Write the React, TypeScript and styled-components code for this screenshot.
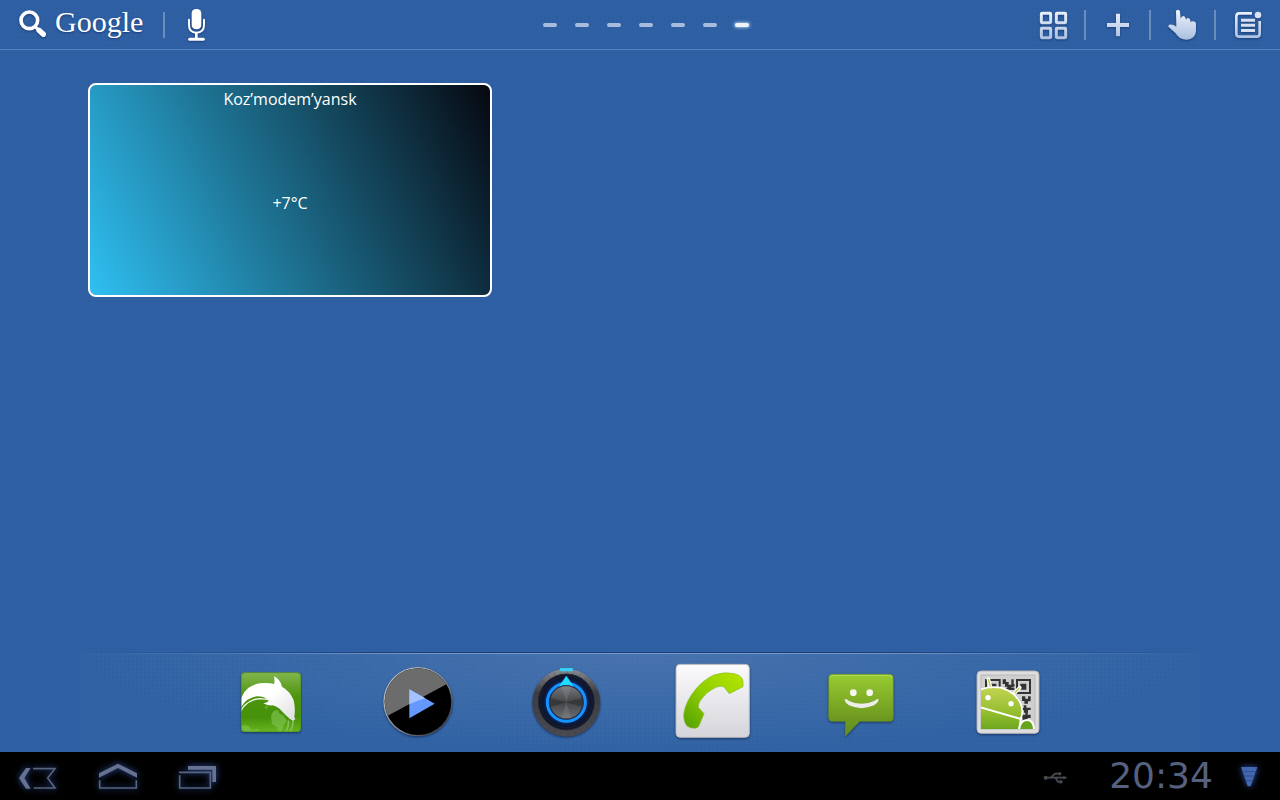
import React from 'react';
import styled, { createGlobalStyle, css } from 'styled-components';

const GlobalStyle = createGlobalStyle`
  * { box-sizing: border-box; }
  body { margin: 0; font-family: 'Open Sans', 'Noto Sans', sans-serif; background: #000; }
  button { margin: 0; padding: 0; border: 0; background: none; color: inherit; font: inherit; cursor: pointer; }
`;

const Screen = styled.div`
  display: flex;
  flex-direction: column;
  min-height: 100vh;
`;

const Desktop = styled.main`
  flex: 1;
  display: flex;
  flex-direction: column;
  background-color: #2f60a3;
  background-image: radial-gradient(circle at 1px 1px, rgba(10, 40, 100, 0.05) 1px, transparent 1px);
  background-size: 4px 4px;
`;

const TopBar = styled.header`
  display: grid;
  grid-template-columns: 1fr auto 1fr;
  align-items: center;
  height: 50px;
  border-bottom: 1px solid #5681c2;
`;

const BarGroup = styled.div<{ $end?: boolean }>`
  display: flex;
  align-items: center;
  justify-content: ${(p) => (p.$end ? 'flex-end' : 'flex-start')};
`;

const Divider = styled.span<{ $short?: boolean }>`
  width: 2px;
  height: ${(p) => (p.$short ? 26 : 30)}px;
  background: #6b8cbd;
`;

const SearchButton = styled.button`
  display: flex;
  align-items: center;
  height: 49px;
  padding-right: 20px;
  color: #fff;
`;

const Brand = styled.span`
  padding-left: 7px;
  padding-bottom: 5px;
  font-family: 'Liberation Serif', serif;
  font-size: 30px;
  line-height: 40px;
  text-shadow: 0 1px 2px rgba(0, 20, 70, 0.5);
`;

const IconButton = styled.button`
  display: block;
  height: 49px;
`;

const Glyph = styled.svg<{ $glow?: boolean }>`
  display: block;
  ${(p) =>
    p.$glow
      ? css`filter: drop-shadow(0 0 3px rgba(60, 110, 220, 0.75));`
      : css`filter: drop-shadow(0 1px 1px rgba(0, 20, 70, 0.45));`}
`;

const Pages = styled.div`
  display: flex;
  gap: 18px;
  padding-left: 12px;
`;

const PageMark = styled.button<{ $active?: boolean }>`
  width: 14px;
  height: 4px;
  border-radius: 2px;
  background: ${(p) => (p.$active ? '#f0f4f8' : '#a8bddb')};
  box-shadow: ${(p) => (p.$active ? '0 0 3px 1px rgba(200, 225, 255, 0.7)' : 'none')};
`;

const Workspace = styled.section`
  flex: 1;
  padding: 33px 88px;
`;

const WeatherCard = styled.article`
  display: flex;
  flex-direction: column;
  align-items: center;
  width: 404px;
  max-width: 100%;
  height: 214px;
  padding-top: 2px;
  border: 2px solid #fff;
  border-radius: 8px;
  background: linear-gradient(64deg, #2fc0f2, #060810) padding-box;
  color: #fff;
`;

const City = styled.h1`
  margin: 0;
  font-size: 16px;
  font-weight: 400;
  line-height: 24px;
`;

const Temperature = styled.p`
  margin: 0;
  padding-top: 80px;
  font-size: 16px;
  line-height: 24px;
`;

const Dock = styled.nav`
  display: flex;
  justify-content: center;
  align-items: center;
  height: 100px;
  margin: 0 80px;
  background:
    linear-gradient(90deg, transparent, rgba(10, 40, 90, 0.6) 30%, rgba(10, 40, 90, 0.6) 70%, transparent) 0 0 / 100% 1px no-repeat,
    linear-gradient(90deg, transparent, rgba(170, 195, 235, 0.5) 30%, rgba(170, 195, 235, 0.5) 70%, transparent) 0 1px / 100% 1px no-repeat,
    radial-gradient(ellipse 50% 100% at 50% 0, rgba(255, 255, 255, 0.11), rgba(255, 255, 255, 0)) 0 1px no-repeat,
    linear-gradient(rgba(90, 150, 190, 0.05), rgba(90, 150, 190, 0.05)) 0 1px no-repeat;
`;

const DockSlot = styled.button`
  display: flex;
  justify-content: center;
  width: 147px;
`;

const DockArt = styled.svg`
  display: block;
  width: 81px;
  height: 80px;
  filter: drop-shadow(0 1px 1px rgba(0, 15, 50, 0.55));
`;

const SystemBar = styled.footer`
  display: flex;
  align-items: center;
  justify-content: space-between;
  height: 48px;
  background: #000;
`;

const SystemGroup = styled.div`
  display: flex;
  align-items: center;
`;

const Clock = styled.time`
  width: 160px;
  padding-left: 22px;
  text-align: center;
  font-family: 'DejaVu Sans', sans-serif;
  font-size: 36px;
  line-height: 48px;
  color: #56617f;
  white-space: nowrap;
`;

const pages = [1, 2, 3, 4, 5, 6, 7];

function BarGradient({ id }: { id: string }) {
  return (
    <linearGradient id={id} x1="0" y1="30" x2="0" y2="120" gradientUnits="userSpaceOnUse">
      <stop offset="0" stopColor="#eef3fb" />
      <stop offset="1" stopColor="#a9bfe0" />
    </linearGradient>
  );
}

function AppsIcon() {
  return (
    <Glyph width="63" height="49" viewBox="3 0 189 147">
      <defs><BarGradient id="bar-apps" /></defs>
      <g fill="none" stroke="url(#bar-apps)" strokeWidth="9">
        <rect x="64" y="40" width="28" height="28" rx="2" />
        <rect x="109" y="40" width="28" height="28" rx="2" />
        <rect x="64" y="85" width="28" height="28" rx="2" />
        <rect x="109" y="85" width="28" height="28" rx="2" />
      </g>
    </Glyph>
  );
}

function AddIcon() {
  return (
    <Glyph width="63" height="49" viewBox="198 0 189 147">
      <defs><BarGradient id="bar-add" /></defs>
      <path fill="url(#bar-add)" d="M288 41h12v28h27v12h-27v28h-12V81h-27V69h27z" />
    </Glyph>
  );
}

function HandIcon() {
  return (
    <Glyph width="63" height="49" viewBox="393 0 189 147">
      <defs><BarGradient id="bar-hand" /></defs>
      <path
        fill="url(#bar-hand)"
        d="M468 34Q468 29 473 29Q479 29 480 34L482 56Q484 48 490 48Q496 48 498 59Q500 53 505 54Q511 55 512 67Q514 62 520 64Q528 65 528 73V92Q527 110 511 117Q496 122 480 114Q473 109 466 99L446 81Q443 76 448 74Q455 72 462 76L469 80Z"
      />
    </Glyph>
  );
}

function NotesIcon() {
  return (
    <Glyph width="64" height="49" viewBox="588 0 192 147">
      <defs><BarGradient id="bar-notes" /></defs>
      <g fill="none" stroke="url(#bar-notes)" strokeWidth="8">
        <path d="M696 40H658Q649 40 649 49V101Q649 110 658 110H710Q719 110 719 101V63" />
      </g>
      <path fill="#d7e1f1" d="M663 56h42v9h-42zM663 71h42v9h-42zM663 87h42v9h-42z" />
      <circle cx="714" cy="45" r="10" fill="#d9e3f3" />
    </Glyph>
  );
}

function DolphinApp() {
  return (
    <DockArt viewBox="21 21 243 240">
      <defs>
        <linearGradient id="dolphin-bg" x1="0" y1="0" x2="0" y2="1">
          <stop offset="0" stopColor="#82b64e" />
          <stop offset=".4" stopColor="#4f940f" />
          <stop offset=".75" stopColor="#45920a" />
          <stop offset="1" stopColor="#67b51f" />
        </linearGradient>
        <linearGradient id="dolphin-body" x1="0" y1="0" x2="1" y2="1">
          <stop offset=".5" stopColor="#fff" />
          <stop offset="1" stopColor="#dcdcdc" />
        </linearGradient>
        <clipPath id="dolphin-clip"><rect x="48" y="52" width="180" height="179" rx="12" /></clipPath>
      </defs>
      <g clipPath="url(#dolphin-clip)">
        <rect x="48" y="52" width="180" height="179" fill="url(#dolphin-bg)" />
        <path fill="#7cc14c" opacity=".7" d="M138 184Q142 165 158 165L163 175L176 182L186 198L177 209L170 231H160L154 215L141 208ZM48 215L58 209L72 214L79 225L100 222V231H48ZM118 157L130 151L126 162Z" />
        <path fill="none" stroke="#86bf59" strokeWidth="5" d="M203 190Q207 212 195 231M190 197Q192 215 183 231" />
        <path fill="none" stroke="#f4faef" strokeWidth="4" d="M46 170Q65 134 104 131L128 133" />
        <path fill="url(#dolphin-body)" d="M46 135Q62 86 116 84Q134 83 147 87Q150 77 147 64Q166 73 171 95Q196 109 206 136Q212 162 208 185L211 193L204 197L195 192Q181 180 170 168Q158 154 142 151Q127 153 115 145Q126 143 131 137Q120 124 96 124Q64 128 46 160Z" />
      </g>
      <rect x="49" y="53" width="178" height="177" rx="12" fill="none" stroke="#4d8b20" strokeWidth="2" />
    </DockArt>
  );
}

function PlayerApp() {
  return (
    <DockArt viewBox="462 21 243 240">
      <defs>
        <clipPath id="player-clip"><circle cx="579" cy="140" r="100" /></clipPath>
        <linearGradient id="player-rim" x1="0" y1="0" x2="1" y2="1">
          <stop offset="0" stopColor="#d0d4da" />
          <stop offset=".5" stopColor="#8f949c" />
          <stop offset="1" stopColor="#20242c" />
        </linearGradient>
      </defs>
      <circle cx="579" cy="140" r="104" fill="url(#player-rim)" />
      <g clipPath="url(#player-clip)">
        <rect x="475" y="36" width="210" height="210" fill="#000" />
        <path fill="#6c6c6c" d="M470 192L690 74V30H470Z" />
      </g>
      <path fill="#6699ff" d="M553 103L629 146L553 190Z" />
      <path fill="#a3c2ff" d="M553 103L601 130Q577 137 553 148Z" />
    </DockArt>
  );
}

function VolumeApp() {
  return (
    <DockArt viewBox="18 21 243 240">
      <defs>
        <linearGradient id="knob-rim" x1="0" y1="0" x2="0" y2="1">
          <stop offset="0" stopColor="#8b8f93" />
          <stop offset=".35" stopColor="#3c3d41" />
          <stop offset="1" stopColor="#4a4a52" />
        </linearGradient>
        <linearGradient id="knob-face" x1="0" y1="0" x2="0" y2="1">
          <stop offset="0" stopColor="#77797c" />
          <stop offset=".5" stopColor="#434447" />
          <stop offset="1" stopColor="#6d6f72" />
        </linearGradient>
        <radialGradient id="knob-well">
          <stop offset=".6" stopColor="#0b3d9b" />
          <stop offset=".82" stopColor="#0d1838" />
          <stop offset="1" stopColor="#10131f" />
        </radialGradient>
      </defs>
      <circle cx="139" cy="143" r="102" fill="url(#knob-rim)" />
      <circle cx="139" cy="143" r="93" fill="none" stroke="#25272b" strokeWidth="10" strokeDasharray="2 18" opacity=".25" />
      <circle cx="139" cy="141" r="84" fill="url(#knob-well)" stroke="#23283a" strokeWidth="3" />
      <circle cx="139" cy="141" r="78" fill="none" stroke="#20243a" strokeWidth="2" />
      <circle cx="139" cy="142" r="57" fill="none" stroke="#1593ff" strokeWidth="9" />
      <path fill="#22d9ff" d="M139 62L162 95Q139 85 116 95Z" />
      <circle cx="139" cy="142" r="50" fill="url(#knob-face)" stroke="#2b2b2d" strokeWidth="3" />
      <path fill="#242629" opacity=".45" d="M139 142L91 128V156ZM139 142L187 128V156Z" />
      <path fill="#a7a9ac" opacity=".2" d="M139 142L124 94H154ZM139 142L124 190H154Z" />
      <rect x="119" y="39" width="40" height="10" rx="3" fill="#38cffa" />
    </DockArt>
  );
}

function PhoneApp() {
  return (
    <DockArt viewBox="459 21 243 240">
      <defs>
        <linearGradient id="phone-bg" x1="0" y1="0" x2="0" y2="1">
          <stop offset="0" stopColor="#fbfbfd" />
          <stop offset="1" stopColor="#d5d4da" />
        </linearGradient>
        <linearGradient id="phone-set" x1="1" y1="0" x2="0" y2="1">
          <stop offset="0" stopColor="#b6e600" />
          <stop offset=".5" stopColor="#91cf00" />
          <stop offset="1" stopColor="#529f00" />
        </linearGradient>
      </defs>
      <rect x="468" y="28" width="220" height="219" rx="12" fill="url(#phone-bg)" stroke="#b9bac1" strokeWidth="3" />
      <path
        fill="url(#phone-set)"
        stroke="#87b930"
        strokeWidth="2"
        d="M491 182Q492 155 514 120Q544 76 582 60Q613 49 643 56Q667 62 669 79V95L628 116L612 96Q603 91 590 96Q561 108 540 138Q534 148 535 157L552 176L538 210Q535 220 523 220Q511 220 501 213Q492 203 491 182Z"
      />
    </DockArt>
  );
}

function MessagingApp() {
  return (
    <DockArt viewBox="15 21 243 240">
      <defs>
        <linearGradient id="sms-bg" x1="0" y1="0" x2="0" y2="1">
          <stop offset="0" stopColor="#98cb32" />
          <stop offset=".7" stopColor="#6f9a20" />
          <stop offset="1" stopColor="#628c20" />
        </linearGradient>
      </defs>
      <path fill="url(#sms-bg)" stroke="#638f22" strokeWidth="2" d="M52 58H224Q235 58 235 69V188Q235 199 224 199H134L91 244V199H52Q41 199 41 188V69Q41 58 52 58Z" />
      <path fill="none" stroke="#b3db5d" strokeWidth="3" d="M45 67Q48 61 56 61H221Q230 61 232 69" />
      <circle cx="115" cy="113" r="10" fill="#f4f6f0" />
      <circle cx="164" cy="113" r="10" fill="#f4f6f0" />
      <path fill="#ececec" d="M89 133Q95 130 101 137Q139 156 179 137Q186 130 191 133Q190 143 177 151Q139 168 102 151Q89 143 89 133Z" />
    </DockArt>
  );
}

function BarcodeApp() {
  return (
    <DockArt viewBox="456 21 243 240">
      <defs>
        <linearGradient id="code-head" x1="0" y1="0" x2="0" y2="1">
          <stop offset="0" stopColor="#c2d451" />
          <stop offset=".6" stopColor="#93bd2f" />
          <stop offset="1" stopColor="#69a51e" />
        </linearGradient>
        <clipPath id="code-clip"><rect x="498" y="60" width="162" height="162" /></clipPath>
      </defs>
      <rect x="486" y="48" width="186" height="187" rx="12" fill="#dedede" stroke="#b5b6b8" strokeWidth="3" />
      <rect x="498" y="60" width="162" height="162" fill="#cfcfcf" stroke="#aaa" strokeWidth="2" />
      <g clipPath="url(#code-clip)">
        <g fill="none" stroke="#333" strokeWidth="6">
          <rect x="606" y="75" width="39" height="39" />
          <path d="M513 112V75H554V104" />
        </g>
        <path fill="#333" d="M616 86h18v18h-18zM526 86h18v18h-18zM563 73h10v8h8v8h8v-16h7v24h-7v7h-12v-9h-7v-8h-7zM574 98h24v7h-24zM621 124h10v7h8v-7h8v15h-8v7h-11v-8h-7zM626 151h8v7h13v7h-8v8h-12v-7h-8v-7h7zM621 179h10v-6h7v6h9v10h-9v6h-15zM590 88h9v6h-9z" />
        <g fill="none" stroke="#fff" strokeWidth="11" strokeLinecap="round">
          <path d="M520 72L527 98M614 98L599 114" />
        </g>
        <path d="M520 72L527 98M614 98L599 114" stroke="#b7ce4b" strokeWidth="4" />
        <path fill="url(#code-head)" stroke="#fff" strokeWidth="5" d="M490 107Q520 92 558 98Q602 111 618 149Q626 171 617 192L612 226H490Z" />
        <path fill="none" stroke="#fff" strokeWidth="6" d="M496 157L621 193" />
        <circle cx="519" cy="128" r="8" fill="#fff" />
        <circle cx="588" cy="146" r="8" fill="#fff" />
        <path fill="#66a41d" stroke="#fff" strokeWidth="6" d="M612 227Q615 195 636 195Q657 195 657 227Z" />
      </g>
    </DockArt>
  );
}

const dockApps = [
  { label: 'Browser', Art: DolphinApp },
  { label: 'Video player', Art: PlayerApp },
  { label: 'Volume', Art: VolumeApp },
  { label: 'Phone', Art: PhoneApp },
  { label: 'Messaging', Art: MessagingApp },
  { label: 'Barcode scanner', Art: BarcodeApp },
];

export default function App() {
  return (
    <Screen>
      <GlobalStyle />
      <Desktop>
        <TopBar>
          <BarGroup>
            <SearchButton>
              <Glyph width="48" height="49" viewBox="0 0 144 147" aria-hidden="true">
                <circle cx="88" cy="61" r="25" fill="none" stroke="#fff" strokeWidth="11" />
                <path stroke="#fff" strokeWidth="9" d="M103 78L115 89" />
                <path stroke="#fff" strokeWidth="16" strokeLinecap="round" d="M117 91L130 103" />
              </Glyph>
              <Brand>Google</Brand>
            </SearchButton>
            <Divider $short />
            <IconButton aria-label="Voice search">
              <Glyph width="63" height="49" viewBox="495 0 189 147">
                <rect x="575" y="27" width="29" height="61" rx="13" fill="#fff" />
                <path fill="none" stroke="#fff" strokeWidth="6" strokeLinecap="round" d="M567 59V75Q567 98 589 98Q612 98 612 75V59" />
                <path stroke="#fff" strokeWidth="8" d="M589 98V118" />
                <path stroke="#fff" strokeWidth="9" strokeLinecap="round" d="M569 118H610" />
              </Glyph>
            </IconButton>
          </BarGroup>
          <Pages>
            {pages.map((n) => (
              <PageMark key={n} $active={n === 7} aria-label={`Home screen ${n}`} />
            ))}
          </Pages>
          <BarGroup $end>
            <IconButton aria-label="Apps"><AppsIcon /></IconButton>
            <Divider />
            <IconButton aria-label="Add"><AddIcon /></IconButton>
            <Divider />
            <IconButton aria-label="Touch"><HandIcon /></IconButton>
            <Divider />
            <IconButton aria-label="Notes"><NotesIcon /></IconButton>
          </BarGroup>
        </TopBar>

        <Workspace>
          <WeatherCard>
            <City>Koz’modem’yansk</City>
            <Temperature>+7°C</Temperature>
          </WeatherCard>
        </Workspace>

        <Dock>
          {dockApps.map(({ label, Art }) => (
            <DockSlot key={label} aria-label={label}><Art /></DockSlot>
          ))}
        </Dock>
      </Desktop>

      <SystemBar>
        <SystemGroup>
          <IconButton aria-label="Back">
            <Glyph $glow width="80" height="49" viewBox="0 21 240 147">
              <path fill="#66728f" d="M78 69H92L73 99L92 131H78L57 99Z" />
              <path fill="none" stroke="#58647f" strokeWidth="5" d="M99 71H165L143 99L165 129H101" />
            </Glyph>
          </IconButton>
          <IconButton aria-label="Home">
            <Glyph $glow width="80" height="49" viewBox="240 21 240 147">
              <path fill="#66728f" d="M297 85L354 56L411 85V98L354 69L297 98Z" />
              <path fill="none" stroke="#58647f" strokeWidth="5" d="M299 106V129H409V106" />
            </Glyph>
          </IconButton>
          <IconButton aria-label="Recent apps">
            <Glyph $glow width="80" height="49" viewBox="480 21 240 147">
              <path fill="#66728f" d="M564 63H648V111H637V74H564Z" />
              <path fill="none" stroke="#58647f" strokeWidth="5" d="M537 82H631V129H539V91" />
            </Glyph>
          </IconButton>
        </SystemGroup>
        <SystemGroup>
          <Glyph width="28" height="48" viewBox="36 21 84 144" role="img" aria-label="USB connected">
            <g fill="none" stroke="#4b4b4b" strokeWidth="5">
              <path d="M47 98H108M62 98L75 86H84M76 98L84 111H92" />
            </g>
            <circle cx="47" cy="98" r="6" fill="#4b4b4b" />
            <circle cx="89" cy="86" r="5" fill="#4b4b4b" />
            <rect x="88" y="106" width="9" height="9" fill="#4b4b4b" />
            <path fill="#4b4b4b" d="M100 93L112 98L100 103Z" />
          </Glyph>
          <Clock dateTime="20:34">20:34</Clock>
          <Glyph $glow width="50" height="48" viewBox="600 21 150 144" role="img" aria-label="Signal">
            <path fill="#4468b0" d="M633 66H682L662 124H653Z" />
            <path stroke="#22407a" strokeWidth="2" d="M636 80H680M641 93H675M646 107H670" />
          </Glyph>
        </SystemGroup>
      </SystemBar>
    </Screen>
  );
}
